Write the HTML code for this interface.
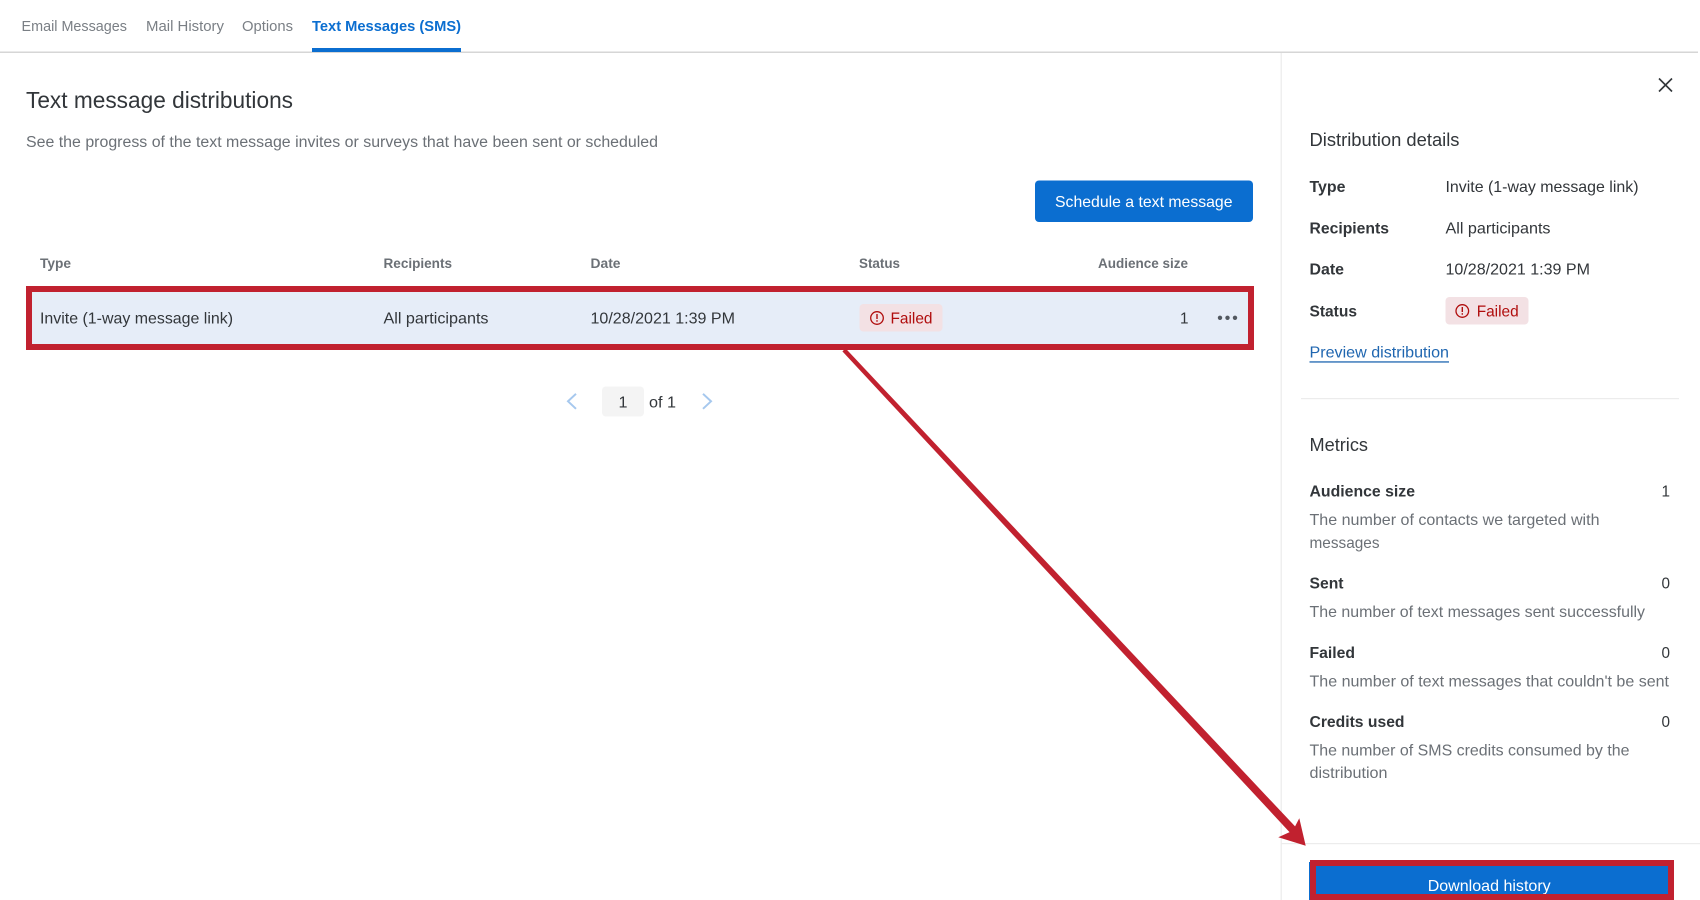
<!DOCTYPE html>
<html>
<head>
<meta charset="utf-8">
<style>
html,body{margin:0;padding:0;width:1700px;height:900px;overflow:hidden;background:#fff}
svg{display:block}
text{font-family:"Liberation Sans",sans-serif;fill:#32363a;font-size:16px}
.b{font-weight:700}
.m{fill:#6b7076}
.h{font-size:13.5px;font-weight:700;fill:#6b7076}
.t{font-size:14.5px;fill:#7a7f85}
.f{fill:#b00d0d}
.w{fill:#fff}
</style>
</head>
<body>
<svg width="1700" height="900" viewBox="0 0 1700 900" xmlns="http://www.w3.org/2000/svg">
<rect width="1700" height="900" fill="#fff"/>

<!-- tabs -->
<rect x="0" y="51.5" width="1698" height="1.5" fill="#d6d6d6"/>
<rect x="312" y="48" width="149" height="4" fill="#0b6ed0"/>
<text class="t" x="21.5" y="31" textLength="105.5" lengthAdjust="spacingAndGlyphs">Email Messages</text>
<text class="t" x="146" y="31" textLength="78" lengthAdjust="spacingAndGlyphs">Mail History</text>
<text class="t" x="242" y="31" textLength="51" lengthAdjust="spacingAndGlyphs">Options</text>
<text class="t b" style="fill:#0b6ed0" x="312" y="31" textLength="149" lengthAdjust="spacingAndGlyphs">Text Messages (SMS)</text>

<!-- main -->
<text style="font-size:23px" x="26" y="108" textLength="267" lengthAdjust="spacingAndGlyphs">Text message distributions</text>
<text class="m" style="font-size:15.5px" x="26" y="147" textLength="632" lengthAdjust="spacingAndGlyphs">See the progress of the text message invites or surveys that have been sent or scheduled</text>

<rect x="1035" y="180.5" width="218" height="41.5" rx="4" fill="#0b6ed0"/>
<text class="w" x="1055" y="207" textLength="177.5" lengthAdjust="spacingAndGlyphs">Schedule a text message</text>

<text class="h" x="40" y="268" textLength="31" lengthAdjust="spacingAndGlyphs">Type</text>
<text class="h" x="383.5" y="268" textLength="68.5" lengthAdjust="spacingAndGlyphs">Recipients</text>
<text class="h" x="590.5" y="268" textLength="30" lengthAdjust="spacingAndGlyphs">Date</text>
<text class="h" x="859" y="268" textLength="41" lengthAdjust="spacingAndGlyphs">Status</text>
<text class="h" x="1098" y="268" textLength="90" lengthAdjust="spacingAndGlyphs">Audience size</text>

<rect x="29" y="289" width="1222" height="58" fill="#e6edf8" stroke="#c1212f" stroke-width="6"/>
<text x="40" y="323.5" textLength="193" lengthAdjust="spacingAndGlyphs">Invite (1-way message link)</text>
<text x="383.5" y="323.5" textLength="105" lengthAdjust="spacingAndGlyphs">All participants</text>
<text x="590.5" y="323.5" textLength="144.5" lengthAdjust="spacingAndGlyphs">10/28/2021 1:39 PM</text>
<rect x="859.5" y="304" width="83" height="27.5" rx="4" fill="#f3e1e4"/>
<circle cx="877" cy="318" r="6.3" fill="none" stroke="#b00d0d" stroke-width="1.3"/>
<rect x="876.3" y="314" width="1.4" height="5" fill="#b00d0d"/>
<rect x="876.3" y="320.2" width="1.4" height="1.5" fill="#b00d0d"/>
<text class="f" x="890.5" y="323.5" textLength="42" lengthAdjust="spacingAndGlyphs">Failed</text>
<text x="1180" y="323.5" textLength="8.5" lengthAdjust="spacingAndGlyphs">1</text>
<circle cx="1220" cy="317.8" r="2.2" fill="#525860"/>
<circle cx="1227.5" cy="317.8" r="2.2" fill="#525860"/>
<circle cx="1235" cy="317.8" r="2.2" fill="#525860"/>

<!-- pagination -->
<path d="M576 393.8 L568 401.3 L576 408.8" fill="none" stroke="#a6c8ee" stroke-width="2"/>
<rect x="602" y="386.5" width="42" height="30" rx="4" fill="#f4f4f4"/>
<text x="618.5" y="407.3" textLength="9" lengthAdjust="spacingAndGlyphs">1</text>
<text x="649" y="407.3" textLength="27" lengthAdjust="spacingAndGlyphs">of 1</text>
<path d="M703 393.8 L711 401.3 L703 408.8" fill="none" stroke="#a6c8ee" stroke-width="2"/>

<!-- side panel -->
<rect x="1280.5" y="53" width="1.5" height="847" fill="#efefef"/>
<path d="M1659 78.5 L1672 91.5 M1672 78.5 L1659 91.5" stroke="#32363a" stroke-width="1.6" fill="none"/>
<text style="font-size:18px" x="1309.5" y="146" textLength="150" lengthAdjust="spacingAndGlyphs">Distribution details</text>

<text class="b" x="1309.5" y="192" textLength="36" lengthAdjust="spacingAndGlyphs">Type</text>
<text x="1445.5" y="192" textLength="193" lengthAdjust="spacingAndGlyphs">Invite (1-way message link)</text>
<text class="b" x="1309.5" y="233.3" textLength="79.5" lengthAdjust="spacingAndGlyphs">Recipients</text>
<text x="1445.5" y="233.3" textLength="105" lengthAdjust="spacingAndGlyphs">All participants</text>
<text class="b" x="1309.5" y="274.7" textLength="34.5" lengthAdjust="spacingAndGlyphs">Date</text>
<text x="1445.5" y="274.7" textLength="144.5" lengthAdjust="spacingAndGlyphs">10/28/2021 1:39 PM</text>
<text class="b" x="1309.5" y="316.3" textLength="47.5" lengthAdjust="spacingAndGlyphs">Status</text>
<rect x="1445.5" y="297" width="83" height="27.5" rx="4" fill="#f3e1e4"/>
<circle cx="1462.3" cy="311" r="6.3" fill="none" stroke="#b00d0d" stroke-width="1.3"/>
<rect x="1461.6" y="307" width="1.4" height="5" fill="#b00d0d"/>
<rect x="1461.6" y="313.2" width="1.4" height="1.5" fill="#b00d0d"/>
<text class="f" x="1476.7" y="316.3" textLength="42" lengthAdjust="spacingAndGlyphs">Failed</text>
<text style="fill:#1f66b0" x="1309.5" y="357.7" textLength="139.5" lengthAdjust="spacingAndGlyphs">Preview distribution</text>
<rect x="1309.5" y="361.3" width="139.5" height="1.3" fill="#1f66b0"/>

<rect x="1301" y="398" width="378" height="1.2" fill="#ececec"/>

<text style="font-size:18px" x="1309.5" y="451" textLength="58.5" lengthAdjust="spacingAndGlyphs">Metrics</text>

<text class="b" x="1309.5" y="496.7" textLength="105.5" lengthAdjust="spacingAndGlyphs">Audience size</text>
<text x="1661.5" y="496.7" textLength="8.5" lengthAdjust="spacingAndGlyphs">1</text>
<text class="m" x="1309.5" y="525" textLength="290" lengthAdjust="spacingAndGlyphs">The number of contacts we targeted with</text>
<text class="m" x="1309.5" y="547.8" textLength="70" lengthAdjust="spacingAndGlyphs">messages</text>

<text class="b" x="1309.5" y="588.7" textLength="34" lengthAdjust="spacingAndGlyphs">Sent</text>
<text x="1661.5" y="588.7" textLength="8.5" lengthAdjust="spacingAndGlyphs">0</text>
<text class="m" x="1309.5" y="617" textLength="335.5" lengthAdjust="spacingAndGlyphs">The number of text messages sent successfully</text>

<text class="b" x="1309.5" y="658.2" textLength="45.5" lengthAdjust="spacingAndGlyphs">Failed</text>
<text x="1661.5" y="658.2" textLength="8.5" lengthAdjust="spacingAndGlyphs">0</text>
<text class="m" x="1309.5" y="686.5" textLength="359.5" lengthAdjust="spacingAndGlyphs">The number of text messages that couldn't be sent</text>

<text class="b" x="1309.5" y="727.2" textLength="95" lengthAdjust="spacingAndGlyphs">Credits used</text>
<text x="1661.5" y="727.2" textLength="8.5" lengthAdjust="spacingAndGlyphs">0</text>
<text class="m" x="1309.5" y="755.5" textLength="320" lengthAdjust="spacingAndGlyphs">The number of SMS credits consumed by the</text>
<text class="m" x="1309.5" y="777.8" textLength="78" lengthAdjust="spacingAndGlyphs">distribution</text>

<rect x="1281" y="843" width="419" height="1.2" fill="#ececec"/>

<!-- download -->
<rect x="1309" y="862" width="362" height="38" fill="#0b6ed0"/>
<text class="w" x="1427.7" y="891" textLength="123" lengthAdjust="spacingAndGlyphs">Download history</text>
<rect x="1313" y="863" width="358" height="34" fill="none" stroke="#c1212f" stroke-width="6"/>

<!-- arrow: tapered shaft with notched head -->
<polygon points="845.6,348.4 842.4,351.4 1290.1,832.7 1295.9,827.3" fill="#c1212f"/>
<polygon points="1305.7,845.7 1278.3,837.3 1291,831.5 1295,826.5 1299.3,818.3" fill="#c1212f"/>
</svg>
</body>
</html>
